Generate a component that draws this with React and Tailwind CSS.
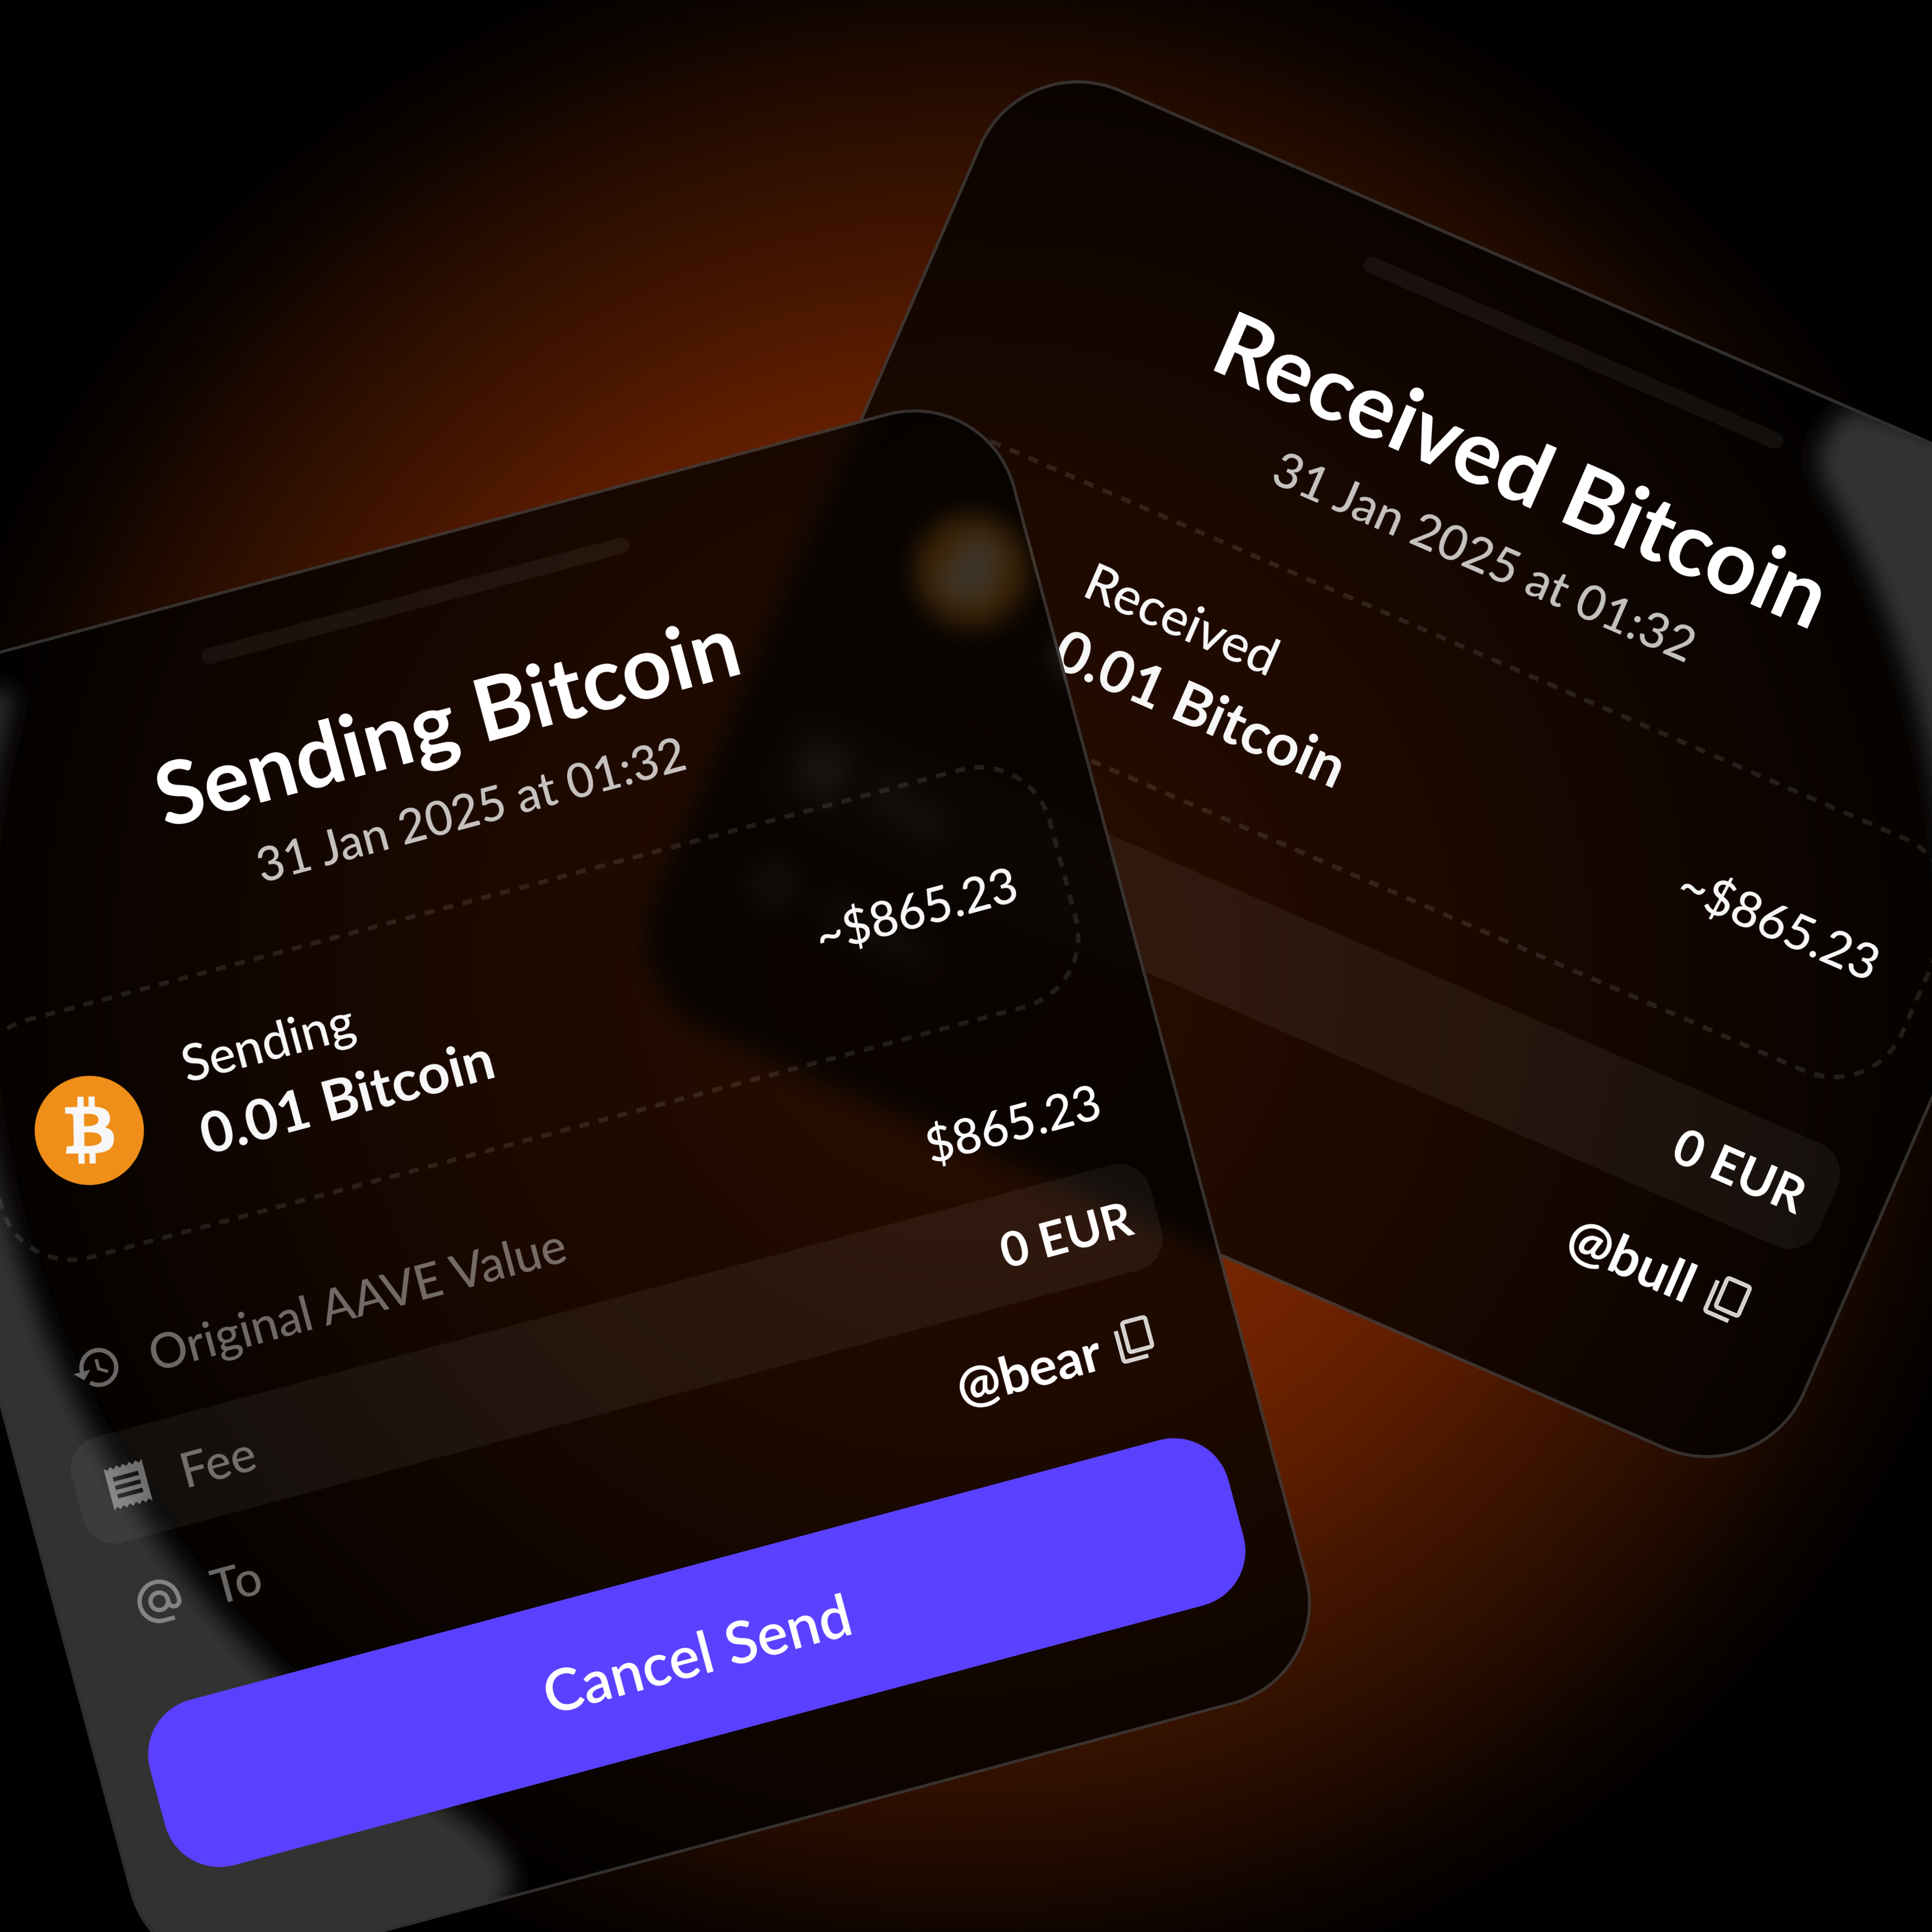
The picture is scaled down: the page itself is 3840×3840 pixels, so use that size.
import React from "react";
import { FaBitcoin } from "react-icons/fa";
import { MdAlternateEmail, MdHistory, MdReceipt } from "react-icons/md";

function CopyIcon() {
  return (
    <svg viewBox="0 -960 960 960" className="size-[108px]" fill="currentColor" stroke="currentColor" strokeWidth="14" aria-hidden="true">
      <path d="M362.31-260Q332-260 311-281q-21-21-21-51.31v-455.38Q290-818 311-839q21-21 51.31-21h335.38Q728-860 749-839q21 21 21 51.31v455.38Q770-302 749-281q-21 21-51.31 21H362.31Zm0-60h335.38q4.62 0 8.46-3.85 3.85-3.84 3.85-8.46v-455.38q0-4.62-3.85-8.46-3.84-3.85-8.46-3.85H362.31q-4.62 0-8.46 3.85-3.85 3.84-3.85 8.46v455.38q0 4.62 3.85 8.46 3.84 3.85 8.46 3.85ZM222.31-120Q192-120 171-141q-21-21-21-51.31v-515.38h60v515.38q0 4.62 3.85 8.46 3.84 3.85 8.46 3.85h395.38v60H222.31Z" />
    </svg>
  );
}

function BitcoinLogo() {
  return (
    <span className="relative size-[224px] shrink-0">
      <span className="absolute inset-[16px] rounded-full bg-[#f7f7f7]" />
      <FaBitcoin className="absolute inset-0 size-full text-[#ef8e19]" aria-hidden="true" />
    </span>
  );
}

function AssetBox({ label, amount, value }) {
  return (
    <div className="relative mt-[114px] flex h-[496px] items-center gap-[100px] px-[100px]">
      <svg className="absolute inset-[4px] h-[calc(100%-8px)] w-[calc(100%-8px)] overflow-visible" aria-hidden="true">
        <rect width="100%" height="100%" rx="144" fill="none" stroke="#ffffff" strokeOpacity="0.1" strokeWidth="9" strokeDasharray="20 19" />
      </svg>
      <BitcoinLogo />
      <div className="flex-1 pb-[16px] text-[#f7f7f7]">
        <p className="text-[100px] leading-[144px] font-medium">{label}</p>
        <p className="text-[112px] leading-[144px] font-bold">{amount}</p>
      </div>
      <p className="text-[96px] leading-[120px] font-medium text-[#f7f7f7]">{value}</p>
    </div>
  );
}

function Row({ icon: Icon, label, highlighted, strong, children }) {
  return (
    <div
      className={
        "flex h-[216px] items-center justify-between rounded-[64px] px-[52px] text-[96px] leading-[120px] " +
        (highlighted ? "bg-white/5" : "")
      }
    >
      <dt className="flex items-center gap-[56px] font-medium text-white/40">
        <Icon className="size-[104px]" aria-hidden="true" />
        {label}
      </dt>
      <dd className={"flex items-center gap-[20px] text-white " + (strong ? "font-bold" : "font-medium")}>{children}</dd>
    </div>
  );
}

function Handle({ name }) {
  return (
    <>
      <span className="text-[104px]">{name}</span>
      <button type="button" aria-label={"Copy " + name} className="text-white/80">
        <CopyIcon />
      </button>
    </>
  );
}

function Sheet({ className, title, haze, children }) {
  return (
    <section
      className={
        "absolute origin-top-left overflow-hidden rounded-[208px] border-[6px] border-white/18 bg-black/75 px-[96px] pt-[96px] pb-[200px] backdrop-blur-[26px] " +
        className
      }
    >
      {haze}
      <div className="relative flex flex-col">
        <div className="h-[32px] w-[880px] self-center rounded-full bg-white/5" />
        <h2 className="mt-[122px] text-center text-[172px] leading-[208px] font-bold text-white">{title}</h2>
        <time dateTime="2025-01-31T01:32" className="mt-[21px] text-center text-[94px] leading-[120px] font-medium text-white/75">
          31 Jan 2025 at 01:32
        </time>
        {children}
      </div>
    </section>
  );
}

function SendingHaze() {
  return (
    <svg className="pointer-events-none absolute top-0 left-0 size-full overflow-visible" aria-hidden="true">
      <defs>
        <filter id="soft-send" x="-20%" y="-20%" width="140%" height="140%">
          <feGaussianBlur stdDeviation="24" />
        </filter>
      </defs>
      <g transform="rotate(15) translate(378 -1393)">
        <path
          d="M20 1370 A1960 1960 0 0 0 885 3590 C965 3640 1015 3690 1005 3740 C995 3790 955 3830 940 3960 L-700 3960 L-700 1370 Z"
          fill="#333333"
          filter="url(#soft-send)"
        />
      </g>
    </svg>
  );
}

function ReceivedHaze() {
  return (
    <svg className="pointer-events-none absolute top-0 left-0 size-full overflow-visible" aria-hidden="true">
      <defs>
        <filter id="soft-receive" x="-30%" y="-20%" width="160%" height="140%">
          <feGaussianBlur stdDeviation="24" />
        </filter>
      </defs>
      <g transform="scale(0.971) rotate(-23.5) translate(-2033 -91)">
        <path
          d="M3880 1920 A1960 1960 0 0 0 3615 935 Q3600 850 3680 800 L4200 940 L4200 1920 Z"
          fill="#333333"
          filter="url(#soft-receive)"
        />
      </g>
    </svg>
  );
}

export default function App() {
  return (
    <main className="relative min-h-screen overflow-hidden bg-black bg-[radial-gradient(circle,#a03300_0%,#8a2b00_21%,#762500_28%,#6b2100_37%,#5a1c00_44%,#471600_51%,#321000_59%,#200a00_66%,#0d0400_72%,#030100_77%,#000000_83%)] font-['Lato',sans-serif]">
      <Sheet
        title="Received Bitcoin"
        haze={<ReceivedHaze />}
        className="top-[2.4%] left-[52.9%] w-[63.1%] scale-[1.03] rotate-[23.5deg]"
      >
        <AssetBox label="Received" amount="0.01 Bitcoin" value="~$865.23" />
        <dl className="mt-[112px] flex flex-col gap-[24px]">
          <Row icon={MdReceipt} label="Fee" highlighted strong>
            0 EUR
          </Row>
          <Row icon={MdAlternateEmail} label="From" strong>
            <Handle name="@bull" />
          </Row>
        </dl>
      </Sheet>

      <Sheet
        title="Sending Bitcoin"
        haze={<SendingHaze />}
        className="top-[36.3%] left-[-9.8%] w-[63.1%] -rotate-15"
      >
        <AssetBox label="Sending" amount="0.01 Bitcoin" value="~$865.23" />
        <dl className="mt-[104px] flex flex-col gap-[24px]">
          <Row icon={MdHistory} label="Original AAVE Value">
            $865.23
          </Row>
          <Row icon={MdReceipt} label="Fee" highlighted strong>
            0 EUR
          </Row>
          <Row icon={MdAlternateEmail} label="To" strong>
            <Handle name="@bear" />
          </Row>
        </dl>
        <button
          type="button"
          className="mt-[97px] h-[340px] w-full rounded-[112px] bg-[#5a41ff] text-[116px] leading-[144px] font-semibold text-white"
        >
          Cancel Send
        </button>
      </Sheet>
    </main>
  );
}
